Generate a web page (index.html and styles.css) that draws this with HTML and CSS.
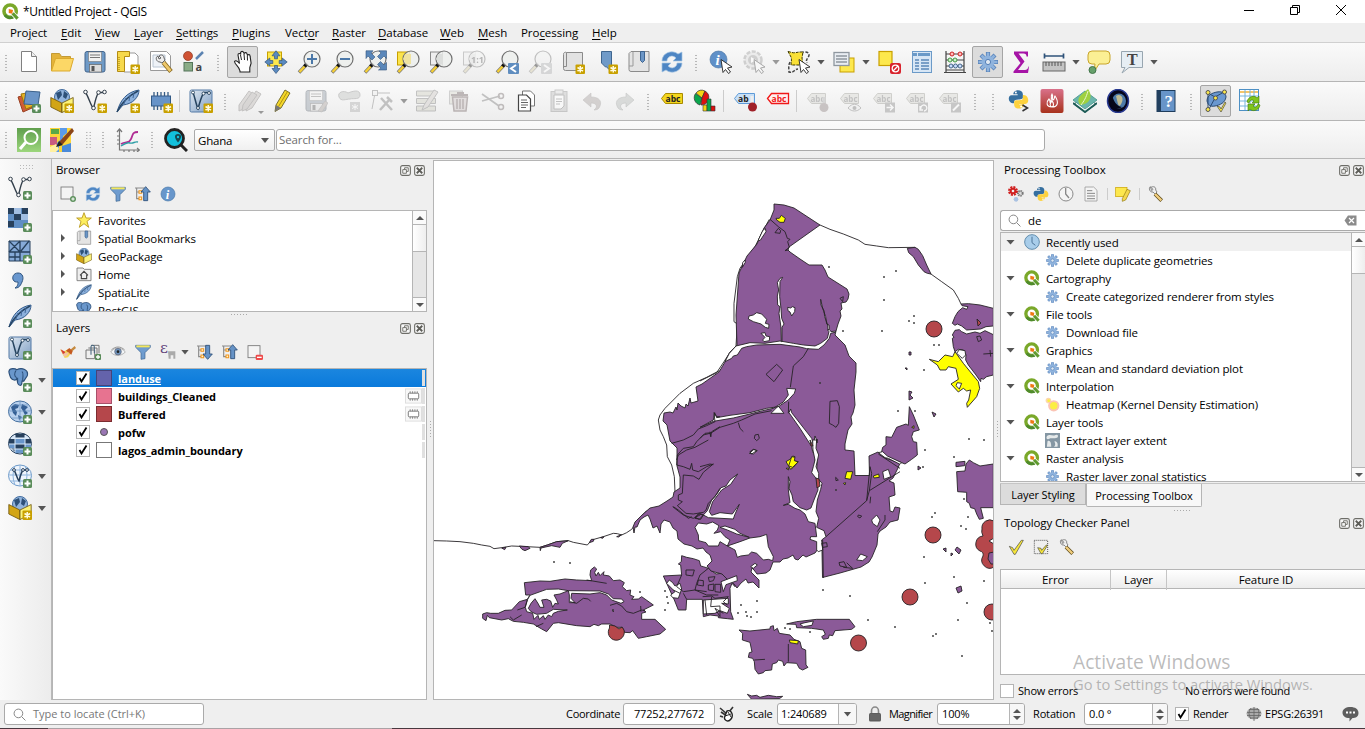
FILE: index.html
```html
<!DOCTYPE html>
<html lang="en">
<head>
<meta charset="utf-8">
<title>*Untitled Project - QGIS</title>
<link rel="stylesheet" href="styles.css">
</head>
<body>
<svg class="defs" width="0" height="0">
<defs>
<linearGradient id="gb" x1="0" y1="0" x2="1" y2="1"><stop offset="0" stop-color="#dfe8f1"/><stop offset="1" stop-color="#7f9fc4"/></linearGradient>
<linearGradient id="gg" x1="0" y1="0" x2="0" y2="1"><stop offset="0" stop-color="#5f9e4d"/><stop offset="1" stop-color="#9cd67c"/></linearGradient>
<linearGradient id="gr" x1="0" y1="0" x2="0" y2="1"><stop offset="0" stop-color="#d9718a"/><stop offset="1" stop-color="#a8321c"/></linearGradient>
<symbol id="add" viewBox="0 0 24 24"><rect x="15" y="15" width="9" height="9" rx="1.500" fill="#5a8c5a"/><path d="M19.500 16.500v6M16.500 19.500h6" stroke="#fff" stroke-width="2"/></symbol>
<symbol id="new" viewBox="0 0 24 24"><rect x="14.500" y="14.500" width="9.500" height="9.500" rx="1" fill="#c8a000"/><path d="M19.250 16v6.500M16.500 17.500l5.500 3.500M16.500 21l5.500-3.500" stroke="#fffbe0" stroke-width="1.500"/></symbol>
<symbol id="q" viewBox="0 0 24 24"><circle cx="11.500" cy="11.500" r="8.700" fill="none" stroke="#7aa82a" stroke-width="5"/><path d="M4 17a9 9 0 0 0 13 2" fill="none" stroke="#4f8b2d" stroke-width="4"/><path d="M13 12.500l9 9.500" stroke="#fff" stroke-width="6.500"/><path d="M15 14.500l7 7.500" stroke="#5f9a2e" stroke-width="4.500"/><path d="M9.500 8.500l6 1.500-1 5-5-1z" fill="#ee7913"/></symbol>
<symbol id="file" viewBox="0 0 24 24"><path d="M4.500 1.500h10l5 5v15h-15z" fill="#fff" stroke="#808080"/><path d="M14.500 1.500v5h5" fill="#eee" stroke="#808080"/></symbol>
<symbol id="folder" viewBox="0 0 24 24"><path d="M1.500 21V3.500h8l2 3h9v4" fill="#e3b33a" stroke="#c39a35"/><path d="M1.500 21l4-12.500h18L20 21z" fill="#fcd766" stroke="#dba92d"/></symbol>
<symbol id="save" viewBox="0 0 24 24"><rect x="2" y="1.500" width="20" height="20.500" rx="2" fill="#6f9ac6" stroke="#42658d"/><rect x="5.500" y="2" width="13" height="9.500" fill="#f1f1f1" stroke="#777" stroke-width=".6"/><path d="M7 5h10M7 7.500h10" stroke="#777"/><rect x="6.500" y="14.500" width="12" height="7.500" fill="#ddd" stroke="#666" stroke-width=".7"/><rect x="8.500" y="16" width="3" height="5" fill="#555"/></symbol>
<symbol id="layout" viewBox="0 0 24 24"><path d="M8 3h11l3 3v16H8z" fill="#fff" stroke="#999"/><path d="M1.500 1.500h12v5h-5v15h-7z" fill="#f7d94c" stroke="#b38b13"/><path d="M3 7v13" stroke="#9a7600" stroke-dasharray="1 1"/><use href="#new"/></symbol>
<symbol id="layman" viewBox="0 0 24 24"><path d="M1.500 1.500h16l4 4v15h-20z" fill="#fff" stroke="#999"/><path d="M4 5h12v12H4z" fill="#eef2f7" stroke="#bac6d3"/><path d="M9 6c-3 1-2 6 2 6l2 1 3-3-1-2c0-3-3-4-5-2l2 2-2 1z" fill="#eee" stroke="#555" stroke-width=".9"/><path d="M14.500 12.500l7.500 9" stroke="#8a6b22" stroke-width="4.500"/><path d="M14.500 12.500l7 8.500" stroke="#eec86b" stroke-width="2.800"/></symbol>
<symbol id="style" viewBox="0 0 24 24"><circle cx="6" cy="6" r="4.500" fill="#cf5233" stroke="#8d3620" stroke-width=".7"/><path d="M14 9l7-7" stroke="#5c84b2" stroke-width="2.500"/><rect x="2" y="12.500" width="8.500" height="8.500" fill="#8aac87" stroke="#55755a"/><text x="13.500" y="21" font-size="11" fill="#444" font-family="Open Sans">a</text></symbol>
<symbol id="hand" viewBox="0 0 24 24"><path d="M9 21c-1-5-5-6-5.500-9.500 1-1.500 3-.5 5 2L7 5c0-2 2-2 2.800-.5L9.600 2.500c.5-1.500 2.500-1.500 3 0l.5 1c1-1.500 2.800-1 3 .7l.4 1c1-1 2.500-.8 2.600 1l1 7-1.300 4.500V22H9z" fill="#fff" stroke="#222" stroke-width="1.100"/><path d="M9.500 5l1 5M13 4l.5 6M16.300 5.500l.2 5" stroke="#222"/></symbol>
<symbol id="pan" viewBox="0 0 24 24"><rect x="3.500" y="2" width="14" height="14" fill="#fde84d" stroke="#c8a000"/><path d="M12 .8l4 5h-2.500v3h-3v-3H8zM12 23.500l4-5h-2.500v-3h-3v3H8zM.8 12l5-4v2.500h3v3h-3V16zM23.200 12l-5-4v2.500h-3v3h3V16z" fill="#5a8ac0" stroke="#35587f" stroke-width=".7"/></symbol>
<symbol id="mag" viewBox="0 0 24 24"><path d="M9.500 14.500l-7.500 8" stroke="#777" stroke-width="3.600"/><path d="M9 15l-6.500 7" stroke="#f5cf35" stroke-width="2.400"/><path d="M10 13.500l-2.500 3" stroke="#111" stroke-width="3.500"/><circle cx="15" cy="9" r="8" fill="#ecefec" fill-opacity=".85" stroke="#707070" stroke-width="1.200"/></symbol>
<symbol id="zin" viewBox="0 0 24 24"><use href="#mag"/><path d="M15 4v10M10 9h10" stroke="#4c78a8" stroke-width="2"/></symbol>
<symbol id="zout" viewBox="0 0 24 24"><use href="#mag"/><path d="M10 9h10" stroke="#4c78a8" stroke-width="2"/></symbol>
<symbol id="zfull" viewBox="0 0 24 24"><use href="#mag"/><path d="M3 .8h7L8 3l4 4-3 3-4-4-2 2.500zM23.500.8v7.700L21 6l-3.500 3.500-3-3L18 3l-2-2.200zM23.500 20h-8l2.500-2-3.500-3.500 3-3L21 15l2.500-2.500z" fill="#5a87ba" stroke="#32557d" stroke-width=".6"/></symbol>
<symbol id="zsel" viewBox="0 0 24 24"><rect x="1.500" y="2" width="12" height="13" fill="#fbe44c" stroke="#c8a000"/><use href="#mag"/><path d="M9 4h6v10h-5l-3-5z" fill="#efe3a0"/></symbol>
<symbol id="zlay" viewBox="0 0 24 24"><rect x="1.500" y="2" width="12" height="13" fill="#eee" stroke="#888"/><use href="#mag"/><path d="M9 4h5v10h-4l-3-5z" fill="#dcdedc"/></symbol>
<symbol id="znat" viewBox="0 0 24 24"><use href="#zlay"/><text x="9" y="13" font-size="9" font-weight="bold" font-family="Open Sans" fill="#555">1:1</text></symbol>
<symbol id="zlast" viewBox="0 0 24 24"><use href="#mag"/><rect x="13" y="13" width="11" height="11" rx="1" fill="#5f8dbf"/><path d="M21 15l-5 3.500 5 3.500" fill="none" stroke="#fff" stroke-width="2"/></symbol>
<symbol id="znext" viewBox="0 0 24 24"><use href="#mag"/><rect x="13" y="13" width="11" height="11" rx="1" fill="#a8b0b8"/><path d="M16 15l5 3.500-5 3.500" fill="none" stroke="#fff" stroke-width="2"/></symbol>
<symbol id="map" viewBox="0 0 24 24"><path d="M5.500 2.500h16v18h-17a2 2 0 0 1-2-2v-14a2 2 0 0 1 3-2v14H3" fill="#e2e2e2" stroke="#8a8a8a"/></symbol>
<symbol id="mapnew" viewBox="0 0 24 24"><use href="#map"/><use href="#new"/></symbol>
<symbol id="bmnew" viewBox="0 0 24 24"><path d="M7.500 1.500h10v20l-5-4.500h-1l-4-4z" fill="#6f9ac8" stroke="#3f668f"/><use href="#new"/></symbol>
<symbol id="bm" viewBox="0 0 24 24"><path d="M4 1.500h18v20H4a2 2 0 0 1-2-2v-16z" fill="#e4e4e4" stroke="#8b8b8b"/><path d="M6 2v14H2" stroke="#999" fill="none"/><path d="M13.500 1.500h4v9l-2 2-2-2z" fill="#6c96c6" stroke="#3d6490"/></symbol>
<symbol id="refresh" viewBox="0 0 24 24"><path d="M2 11C2 3 12-1 18 4l4-2v9h-9l3-3c-4-4-9-1-9 3zM22 13c0 8-10 12-16 7l-4 2v-9h9l-3 3c4 4 9 1 9-3z" fill="#4e86c4" stroke="#a5c4e3" stroke-width=".7"/></symbol>
<symbol id="cur" viewBox="0 0 24 24"><path d="M12 9.500l11 7.500-4.500 1 3 4-2 1.500-3-4-2.500 3z" fill="#fff" stroke="#222" stroke-width=".9"/></symbol>
<symbol id="info" viewBox="0 0 24 24"><circle cx="9.500" cy="9.500" r="8.500" fill="#5f90c8" stroke="#44719f" stroke-width=".6"/><text x="6.500" y="14.500" fill="#fff" font-family="Liberation Serif" font-style="italic" font-weight="bold" font-size="15">i</text></symbol>
<symbol id="identify" viewBox="0 0 24 24"><use href="#info"/><use href="#cur"/></symbol>
<symbol id="gearsym" viewBox="0 0 24 24"><g stroke="#5580b8" stroke-width="4.200"><path d="M12 2v20M2 12h20M5 5l14 14M19 5L5 19"/></g><g stroke="#8fb3dd" stroke-width="2.600"><path d="M12 2.500v19M2.500 12h19M5.500 5.500l13 13M18.500 5.500l-13 13"/></g><circle cx="12" cy="12" r="6.500" fill="#8fb3dd"/><circle cx="12" cy="12" r="2.600" fill="#dfe8f2" stroke="#5580b8"/></symbol>
<symbol id="action" viewBox="0 0 24 24"><circle cx="11" cy="10" r="8.500" fill="#ddd" stroke="#999" stroke-width="2.500" stroke-dasharray="4 1.500"/><circle cx="11" cy="10" r="5" fill="#999"/><path d="M9 7v6l5-3z" fill="#fff"/><use href="#cur"/></symbol>
<symbol id="select" viewBox="0 0 24 24"><path d="M3 12c-2 4-1 7-1 10 6 1 5-3 9-3M14 3c4-2 8-1 8 2s-4 4-2 8" fill="none" stroke="#444" stroke-dasharray="3 1.500" stroke-width="1.500"/><path d="M1 1.500l4 1c3 1 6-1 11-.5L15 8l1 7H4c0-3 1-5 0-8z" fill="#f9e036" stroke="#3c3800" stroke-dasharray="3 1"/><use href="#cur"/></symbol>
<symbol id="form" viewBox="0 0 24 24"><rect x="8" y="8" width="14" height="14" fill="#fde84d" stroke="#c8a000"/><rect x="2" y="2.500" width="15" height="13" fill="#e9edf2" stroke="#8f979f" stroke-width="1.300"/><path d="M4 6h11M4 9h11M4 12h11" stroke="#8f979f" stroke-width="1.400"/></symbol>
<symbol id="desel" viewBox="0 0 24 24"><rect x="2" y="1.500" width="13" height="14" fill="#fde84d" stroke="#c8a000" stroke-width="1.200"/><rect x="13" y="13" width="11" height="11" rx="2" fill="#d8232d"/><circle cx="18.500" cy="18.500" r="3.300" fill="none" stroke="#fff" stroke-width="1.300"/><path d="M16 21l5-5" stroke="#fff" stroke-width="1.300"/></symbol>
<symbol id="table" viewBox="0 0 24 24"><rect x="2.500" y="1.500" width="19" height="21" fill="#d7e6f5" stroke="#6b9ac8"/><path d="M3 4.500h4M8 4.500h12" stroke="#6b9ac8" stroke-width="3"/><path d="M5 10h4M11 10h8M5 13h4M11 13h8M5 16h4M11 16h8M5 19h4M11 19h8" stroke="#5b88b8" stroke-width="1.300"/></symbol>
<symbol id="abacus" viewBox="0 0 24 24"><path d="M3 1v21M21 1v21M1 22.500h22M3 4h18M3 10h18M3 16h18M3 20h18" stroke="#444" stroke-width="1.200"/><g stroke-width="1"><g fill="#fbb" stroke="#c22"><circle cx="9" cy="4" r="2"/><circle cx="17" cy="4" r="2"/></g><g fill="#cec" stroke="#494"><circle cx="7" cy="10" r="2"/><circle cx="12" cy="10" r="2"/></g><g fill="#cdf" stroke="#468"><circle cx="8" cy="16" r="2"/><circle cx="12.500" cy="16" r="2"/><circle cx="17" cy="16" r="2"/></g></g></symbol>
<symbol id="sigma" viewBox="0 0 24 24"><path d="M5 1.500h14v5h-1.500c0-2-1-3-3-3H9.500l6 8-6.500 8.500h7c2 0 3-1.500 3.500-3.500H20l-1 6.500H4.500v-1.500l7-8.500-6.500-9z" fill="#a614a6"/></symbol>
<symbol id="measure" viewBox="0 0 24 24"><path d="M2 6h20M2.500 3.500v5M21.500 3.500v5" stroke="#2f537a" stroke-width="1.700"/><rect x="1" y="12" width="22" height="9" fill="#c4c4c4" stroke="#666"/><path d="M4 12v4M7 12v4M10 12v4M13 12v4M16 12v4M19 12v4" stroke="#555"/></symbol>
<symbol id="tip" viewBox="0 0 24 24"><path d="M5 1h14q4 0 4 4v5q0 4-4 4h-7l-5 8 1-8H5q-4 0-4-4V5q0-4 4-4z" fill="#fbef94" stroke="#c8a52c"/><circle cx="5.500" cy="20" r="3.500" fill="#66a06b" stroke="#42754a"/></symbol>
<symbol id="textann" viewBox="0 0 24 24"><path d="M1.500 1.500h21v16H9l-7 5.500 3-5.500H1.500z" fill="#e6eef4" stroke="#98a6b0"/><text x="7" y="15" font-family="Liberation Serif" font-weight="bold" font-size="16" fill="#444">T</text></symbol>
<symbol id="dsm" viewBox="0 0 24 24"><path d="M1 8l10-3 4 14-9 4z" fill="#cf5c36" stroke="#984022"/><path d="M4 5l11-2 4 13-10 4z" fill="#e6b124" stroke="#9f780b"/><path d="M9 2l14 1-2 13-14-1z" fill="#6b95c7" stroke="#3c628c"/><use href="#add"/></symbol>
<symbol id="gpkg" viewBox="0 0 24 24"><circle cx="12" cy="8" r="7.500" fill="#92b4dd" stroke="#426c9e"/><path d="M6 4l5-2 1 4-4 5zM14 2l4 3-2 5-3-2z" fill="#2d5078"/><path d="M.8 8.500l11 5.500v9.500L.8 18z" fill="#d2a516" stroke="#6b5208" stroke-width=".8"/><path d="M23.200 8.500L12 14v9.500L23.200 18z" fill="#fbf27a" stroke="#6b5208" stroke-width=".8"/></symbol>
<symbol id="gpkgn" viewBox="0 0 24 24"><use href="#gpkg"/><use href="#new"/></symbol>
<symbol id="vec" viewBox="0 0 24 24"><path d="M2.500 3.500c3 4 5 13 8 16 1-4 2-11 5-16h6" fill="none" stroke="#333f4b" stroke-width="1.400"/><g fill="#fff" stroke="#333f4b"><circle cx="2.500" cy="3" r="1.800"/><circle cx="15.500" cy="3.500" r="1.800"/><circle cx="21.500" cy="3" r="1.800"/><circle cx="10.500" cy="19" r="1.800"/></g></symbol>
<symbol id="vecn" viewBox="0 0 24 24"><use href="#vec"/><use href="#new"/></symbol>
<symbol id="veca" viewBox="0 0 24 24"><use href="#vec"/><use href="#add"/></symbol>
<symbol id="feather" viewBox="0 0 24 24"><path d="M1 23C4 12 10 3 23 1c0 7-6 14-16 15z" fill="#8bb0dc" stroke="#325a8a"/><path d="M1 23C6 13 12 7 22 2" fill="none" stroke="#264463" stroke-width="1.400"/><path d="M10 9l-2 6M14 6l-1 6M18 4l-1 5" stroke="#42699a"/></symbol>
<symbol id="feathern" viewBox="0 0 24 24"><use href="#feather"/><use href="#new"/></symbol>
<symbol id="feathera" viewBox="0 0 24 24"><use href="#feather"/><use href="#add"/></symbol>
<symbol id="chip" viewBox="0 0 24 24"><path d="M5 3v18M8.500 3v18M12 3v18M15.500 3v18M19 3v18" stroke="#375c85" stroke-width="1.300"/><rect x="2.500" y="7" width="19" height="10" fill="#6793c8" stroke="#325985"/></symbol>
<symbol id="chipn" viewBox="0 0 24 24"><use href="#chip"/><use href="#new"/></symbol>
<symbol id="vbox" viewBox="0 0 24 24"><rect x="1" y="1" width="22" height="22" rx="1.500" fill="url(#gb)" stroke="#5279a5"/><path d="M4 3.500c2 5 3 12 5 16 2-6 3-12 6-16h4" fill="none" stroke="#27445f" stroke-width="1.500"/><g fill="#fff" stroke="#27445f" stroke-width=".9"><circle cx="4" cy="3.500" r="1.500"/><circle cx="14.500" cy="4.500" r="1.500"/><circle cx="20" cy="4" r="1.500"/><circle cx="9" cy="19" r="1.500"/></g></symbol>
<symbol id="vboxn" viewBox="0 0 24 24"><use href="#vbox"/><use href="#new"/></symbol>
<symbol id="vboxa" viewBox="0 0 24 24"><use href="#vbox"/><use href="#add"/></symbol>
<symbol id="pencil" viewBox="0 0 24 24"><path d="M5 16L14 1l5 3-9 15-6 3.500z" fill="#f5d72a" stroke="#6c6325" stroke-width=".9"/><path d="M7.500 17.500L16.500 2.500" stroke="#b09212"/><path d="M5 16l5 3-6 3.500z" fill="#777"/></symbol>
<symbol id="pencils" viewBox="0 0 24 24"><path d="M1 16L11 2l4 3-10 15-4 2zM9 16L18 2l5 3-9 14-6 3z" fill="#c9b3a5" stroke="#83756e"/><path d="M5 16l9-13 5 3-10 14-5 2z" fill="#bca99d" stroke="#83756e"/></symbol>
<symbol id="saveed" viewBox="0 0 24 24"><use href="#save"/><path d="M14 22l7-10 3 2-6 9z" fill="#bb998b" stroke="#777" stroke-width=".7"/></symbol>
<symbol id="poly" viewBox="0 0 24 24"><path d="M2 8c-2-5 5-7 9-4 5-2 12-4 12 2 0 5-6 3-10 4C9 10 4 13 2 8z" fill="#b5c2b5" stroke="#888"/><rect x="13" y="13" width="10" height="10" fill="#aaa"/><path d="M18 15v6M15 16.500l6 3M15 19.500l6-3" stroke="#fff"/></symbol>
<symbol id="vertex" viewBox="0 0 24 24"><path d="M5 4L2 20M5 4h15" stroke="#777"/><rect x="2.500" y="1.500" width="5" height="5" fill="#eee" stroke="#777"/><path d="M11 9l11 12M20 10L10 21M17 8l5 5" stroke="#777" stroke-width="2.500"/></symbol>
<symbol id="attr" viewBox="0 0 24 24"><path d="M1.500 2h19v5h-19zM1.500 9.500h19v5h-19zM1.500 17h19v5h-19z" fill="#cfcf98" stroke="#777"/><path d="M7 21l2-5L19 1l4 2-10 15z" fill="#d9c3b4" stroke="#777"/></symbol>
<symbol id="trash" viewBox="0 0 24 24"><rect x="1.500" y="2" width="13" height="13" fill="#d9d9a8" stroke="#999"/><path d="M3 6h17M9 4h7" stroke="#8d5050" stroke-width="2"/><path d="M4.500 8h15l-1.500 14H6z" fill="#e0b8b8" stroke="#8d5050" stroke-width="1.500"/><path d="M9 10v10M12 10v10M15 10v10" stroke="#8d5050" stroke-width="1.500"/></symbol>
<symbol id="cut" viewBox="0 0 24 24"><path d="M1 5l17 12M1 12l18-5" stroke="#777" stroke-width="1.800"/><circle cx="20" cy="18" r="2.500" fill="none" stroke="#866" stroke-width="1.500"/><circle cx="20" cy="7" r="2.500" fill="none" stroke="#866" stroke-width="1.500"/></symbol>
<symbol id="copy" viewBox="0 0 24 24"><path d="M8.500 2h8l4 4v11h-12z" fill="#fff" stroke="#777"/><path d="M4.500 6h8l4 4v12h-12z" fill="#fff" stroke="#444" stroke-width="1.200"/><path d="M7 11h6M7 13.500h7M7 16h7M7 18.500h5" stroke="#666"/></symbol>
<symbol id="paste" viewBox="0 0 24 24"><rect x="4" y="2.500" width="16" height="20" fill="#bbb" stroke="#888"/><path d="M7 6h10v11l-3 3H7z" fill="#fff" stroke="#777"/><rect x="8" y="1" width="8" height="4" fill="#ddd" stroke="#888"/><path d="M9 10h6M9 12.500h6M9 15h4" stroke="#777"/></symbol>
<symbol id="undo" viewBox="0 0 24 24"><path d="M3 11l8-7v4c8 0 11 4 9 9-1 3-3 4-6 4 4-3 3-7-3-7v4z" fill="#b79a90" stroke="#8a7a75" stroke-width=".6"/></symbol>
<symbol id="redo" viewBox="0 0 24 24"><path d="M21 11l-8-7v4c-8 0-11 4-9 9 1 3 3 4 6 4-4-3-3-7 3-7v4z" fill="#a9b8ae" stroke="#78857c" stroke-width=".6"/></symbol>
<symbol id="lab" viewBox="0 0 24 24"><path d="M1.500 9.500l4-5h17v10h-17z" fill="#f3d51d" stroke="#a88a00"/><text x="5.500" y="12.500" font-size="8.500" font-weight="bold" font-family="Open Sans" fill="#222">abc</text></symbol>
<symbol id="labr" viewBox="0 0 24 24"><path d="M1.500 9.500l4-5h17v10h-17z" fill="#fff0f0" stroke="#f01818" stroke-width="1.300"/><text x="5.500" y="12.500" font-size="8.500" font-weight="bold" font-family="Open Sans" fill="#f01818">abc</text></symbol>
<symbol id="labb" viewBox="0 0 24 24"><path d="M1.500 9.500l4-5h16v10h-16z" fill="#c9e0f6" stroke="#5e9bd8"/><text x="5" y="12.500" font-size="8.500" font-weight="bold" font-family="Open Sans" fill="#222">ab</text><path d="M19 7v9" stroke="#eee" stroke-width="3"/><circle cx="19.500" cy="18" r="4.500" fill="#a02028"/></symbol>
<symbol id="labg" viewBox="0 0 24 24"><path d="M1.500 9.500l4-5h14v10h-14z" fill="#d8d6bd" stroke="#9a9878"/><text x="4.500" y="12.500" font-size="8" font-weight="bold" font-family="Open Sans" fill="#777">abc</text></symbol>
<symbol id="lg1" viewBox="0 0 24 24"><use href="#labg"/><path d="M18 8v9" stroke="#aaa" stroke-width="3"/><circle cx="18" cy="18.500" r="4.500" fill="#a77"/></symbol>
<symbol id="lg2" viewBox="0 0 24 24"><use href="#labg"/><path d="M9 19c4-5 9-5 13 0-4 4-9 4-13 0z" fill="#eee" stroke="#777"/><circle cx="15.500" cy="19" r="2" fill="#777"/></symbol>
<symbol id="lg3" viewBox="0 0 24 24"><use href="#labg"/><rect x="13" y="13.500" width="10" height="10" fill="#888"/><path d="M14.500 18.500h6M18 15.500l3 3-3 3" stroke="#fff" fill="none" stroke-width="1.500"/></symbol>
<symbol id="lg4" viewBox="0 0 24 24"><use href="#labg"/><rect x="13" y="13.500" width="10" height="10" fill="#888"/><path d="M16 20a3 3 0 1 1 3 2M15 17v4h3" stroke="#fff" fill="none" stroke-width="1.300"/></symbol>
<symbol id="lg5" viewBox="0 0 24 24"><use href="#labg"/><rect x="13" y="13.500" width="10" height="10" fill="#888"/><path d="M15 21.500l6-6" stroke="#fff" stroke-width="2"/></symbol>
<symbol id="diag" viewBox="0 0 24 24"><path d="M9 9L2.500 4.500A7.500 7.500 0 0 0 7 16z" fill="#0aa54d" stroke="#333" stroke-width=".7"/><path d="M9 9L3 4a7.500 7.500 0 0 1 9-2z" fill="#f5d613" stroke="#333" stroke-width=".7"/><path d="M9 9l3-7a7.500 7.500 0 0 1-4 14z" fill="#d11" stroke="#333" stroke-width=".7"/><path d="M10 16h4v6h-4z" fill="#f5d613" stroke="#333" stroke-width=".6"/><path d="M14 10h4v12h-4z" fill="#0aa54d" stroke="#333" stroke-width=".6"/><path d="M18 17h4v5h-4z" fill="#d11" stroke="#333" stroke-width=".6"/></symbol>
<symbol id="py" viewBox="0 0 24 24"><path d="M6 6c0-6 11-6 11 0v4c0 3-9 1-10 4v2C0 18-1 7 4 7h7V6z" fill="#366f9f"/><path d="M18 17c0 7-11 7-11 1v-3c0-4 9-1 10-4V7c7-1 8 10 3 10h-7v1z" fill="#fdd23f"/><circle cx="9" cy="4" r="1.100" fill="#fff"/><circle cx="15" cy="20" r="1.100" fill="#fff"/></symbol>
<symbol id="pyc" viewBox="0 0 24 24"><use href="#py" x="1" width="21" height="21"/><path d="M15.500 16l5 3-5 3" fill="none" stroke="#333" stroke-width="1.500"/></symbol>
<symbol id="fire" viewBox="0 0 24 24"><rect x=".5" width="23" height="24" rx="2" fill="url(#gr)"/><path d="M12 5c2 3-1 4 1 6 2-1 1-3 2-4 4 6 3 11-3 11-6 0-6-5-3-8 1 1 1 2 1 3 3-2 0-5 2-8zM12 12c2 2 2 5 0 6-3-1-2-4 0-6z" fill="none" stroke="#fff" stroke-width="1.100"/></symbol>
<symbol id="leaf" viewBox="0 0 24 24"><path d="M1 15l11-7 11 7-11 8z" fill="#fff" stroke="#16534d"/><path d="M0 11l12-9 12 9-12 9z" fill="#6bb5ac" stroke="#55a096"/><path d="M0 14l12 9 12-9" fill="none" stroke="#1d5c57" stroke-width="2"/><path d="M7 16C2 8 10 5 15 0c5 7 3 15-8 16z" fill="#9fd140"/><path d="M8 16c3-4 5-7 7-14" stroke="#eaf5cd" fill="none"/></symbol>
<symbol id="earth" viewBox="0 0 24 24"><ellipse cx="12" cy="12" rx="10.500" ry="11.500" fill="#05051c" stroke="#27388f" stroke-width="1.500"/><ellipse cx="13" cy="12" rx="7" ry="7.500" fill="#4c79a8"/><path d="M10 7c4-3 8 1 6 6-2 5-3 4-4 2z" fill="#c1bb93"/><path d="M6 5c1 6 4 12 10 13-6 4-13 0-12-7z" fill="#070719"/></symbol>
<symbol id="help" viewBox="0 0 24 24"><rect x="2" y="1.500" width="18" height="21" fill="#6794c8" stroke="#1e3c5c"/><path d="M2 1.500h4v21H2z" fill="#22405f"/><text x="9.500" y="17.500" font-family="Liberation Serif" font-size="17" fill="#fff">?</text></symbol>
<symbol id="topo" viewBox="0 0 24 24"><path d="M3 12C3 6 8 4 13 3c6-1 9 2 9 5-1 6-6 8-11 9-5 1-7-1-8-5z" fill="#6a98d0" stroke="#2a4b72"/><path d="M4 4l7 4 9-5M11 9L5 20M4 4v16" stroke="#2a4b72" fill="none"/><g fill="#fbe94a" stroke="#555"><circle cx="4" cy="3.500" r="2"/><circle cx="20.500" cy="3" r="2"/><circle cx="11.500" cy="9" r="2"/><circle cx="4" cy="20.500" r="2"/></g><path d="M13 17l3 1 1 2 4-7 1 1-5 9z" fill="#fbe94a" stroke="#333" stroke-width=".6"/></symbol>
<symbol id="tabref" viewBox="0 0 24 24"><rect x="2.500" y=".5" width="19" height="21" fill="#fff" stroke="#4d90c5"/><path d="M3 3h18" stroke="#f6c66a" stroke-width="2"/><path d="M3 7h18M3 12h18M3 17h18M8 1v20M13 1v20M17 1v20" stroke="#79b5dc"/><path d="M10 13c1-6 8-7 10-4l2-2v7h-7l2-2c-2-2-4-1-5 2zM23 16c-1 6-8 7-10 4l-2 2v-7h7l-2 2c2 2 4 1 5-2z" fill="#7fc41c" stroke="#3f7a06" stroke-width=".6"/></symbol>
<symbol id="greenmag" viewBox="0 0 24 24"><rect width="24" height="24" fill="url(#gg)"/><circle cx="14" cy="9.500" r="6.500" fill="none" stroke="#fff" stroke-width="2"/><path d="M9 14l-6 7" stroke="#fff" stroke-width="3"/></symbol>
<symbol id="osm" viewBox="0 0 24 24"><rect width="21" height="24" fill="#fbd43a"/><path d="M10 0h7v5l-4 3v5l-4 5v6H6v-8l4-4z" fill="#5b9bea"/><path d="M12 18l9-3v9h-9z" fill="#4a8ad8"/><path d="M0 9h7v8H0z" fill="#c85c80"/><path d="M1 1h8v5H1z" fill="#58a848"/><path d="M0 19l6-3 3 5-3 3H0z" fill="#fff0a0"/><path d="M9 14L22 0l2 3-11 13-5 1z" fill="#8b4518"/><path d="M9 13l4 4-7 2z" fill="#222"/></symbol>
<symbol id="plot" viewBox="0 0 24 24"><path d="M3.500 2v20H23M1 4l2.500-3L6 4M1 8h2M1 12h2M1 16h2M8 22v2M13 22v2M18 22v2M21 20l2.500 2-2.500 2" stroke="#777" stroke-width="1.200" fill="none"/><path d="M5 16c5-3 8 0 10-5 2-4 1-7 7-7" fill="none" stroke="#b02c93" stroke-width="1.800"/><path d="M5 18c5-3 7-4 9-3 4 1 4-2 8-1" fill="none" stroke="#2f9ea7" stroke-width="1.400"/></symbol>
<symbol id="geo" viewBox="0 0 24 24"><circle cx="10.500" cy="10.500" r="9" fill="#12c0dc" stroke="#222" stroke-width="2.800"/><path d="M17 17l6 6" stroke="#222" stroke-width="3"/><path d="M14 6c4 0 4 4 0 8.500-4-4.500-4-8.500 0-8.500z" fill="#16454f"/><circle cx="14" cy="9" r="1.200" fill="#12c0dc"/></symbol>
<symbol id="raster" viewBox="0 0 24 24"><path d="M0 0h20v20H0z" fill="#5f8ec4"/><path d="M0 0h6v6H0zM14 0h6v6h-6zM6 6h7v6H6zM0 13h6v6H0z" fill="#27405c"/><path d="M6 0h7v6H6zM13 6h7v6h-7z" fill="#a1bee2"/><use href="#add"/></symbol>
<symbol id="mesh" viewBox="0 0 24 24"><path d="M1 1h21v20H1z" fill="#86aad8" stroke="#27405c"/><path d="M1 12h21M12 1v20M1 1l11 11M1 12L12 1M13 11l8-10M7 12v9M1 17h11" stroke="#27405c" stroke-width="1.300" fill="none"/><use href="#add"/></symbol>
<symbol id="comma" viewBox="0 0 24 24"><path d="M10 1c5 0 6 5 4 9-2 5-4 6-7 6 3-2 3-4 3-6-7 1-7-9 0-9z" fill="#6a98cf" stroke="#2f547f"/><use href="#add"/></symbol>
<symbol id="pg" viewBox="0 0 24 24"><path d="M1 4c1-5 8-3 9-2 6-3 14 0 12 7l-4 6h-2c0 4-1 6-4 4-2-2-1-6-2-7-1 3-5 2-7-1-1-3-2-5-2-7z" fill="#6a97cc" stroke="#2c4f79" stroke-width="1.300"/><path d="M9 3c-2 3-2 7 1 8M16 4c3 3 0 6 1 11M11 11v5" fill="none" stroke="#2c4f79" stroke-width="1.200"/></symbol>
<symbol id="pga" viewBox="0 0 24 24"><use href="#pg" width="21" height="21"/><use href="#add"/></symbol>
<symbol id="wms" viewBox="0 0 24 24"><ellipse cx="12" cy="11.500" rx="11.500" ry="10.500" fill="#b9d1ee" stroke="#47719f"/><path d="M3 7l4-3 4 1-1 3-3 1 2 3-1 4-3-3zM14 4l6 3-3 3 3 3-3 2-2-4-2-3zM10 15l4 2-3 3z" fill="#345f94"/><path d="M12 1v21M1 11h22M4 5h16M4 18h16" stroke="#698fbd" fill="none" stroke-width=".7"/><use href="#add"/></symbol>
<symbol id="xyz" viewBox="0 0 24 24"><ellipse cx="12" cy="11.500" rx="11.500" ry="10.500" fill="#d9e8f8" stroke="#27405c"/><path d="M7 2h10v4H7zM1 7h6v5H1zM17 7h6v5h-6zM7 12h10v5H7zM3 16h4v4zM17 17h4l-3 3z" fill="#27405c"/><path d="M7 7h10v5H7zM1 12h6v4H2zM17 12h6v4h-6zM7 17h10v4H7z" fill="#6996ca"/><path d="M3 6h18M1 12h22M2 17h20M7 3v17M17 3v17" stroke="#d9e8f8"/><use href="#add"/></symbol>
<symbol id="wfs" viewBox="0 0 24 24"><ellipse cx="12" cy="11.500" rx="11.500" ry="10.500" fill="#eff5fc" stroke="#6d9ac9"/><path d="M1 11h22M3 6h18M3 17h18M12 1v21M7 2q-4 9 0 19M17 2q4 9 0 19" stroke="#8eb4dd" fill="none"/><path d="M6 6c2 3 3 9 5 11 1-4 2-8 4-11h4" fill="none" stroke="#27405c" stroke-width="1.500"/><g fill="#fff" stroke="#27405c"><circle cx="6" cy="6" r="1.400"/><circle cx="15" cy="6" r="1.400"/><circle cx="19" cy="6" r="1.400"/></g><use href="#add"/></symbol>
<symbol id="funnel" viewBox="0 0 24 24"><path d="M1 2h22v3l-8 8v9l-6 1V13L1 5z" fill="#6f9ccf" stroke="#3c6590"/><path d="M2 3.500h20" stroke="#f4e75e" stroke-width="3"/></symbol>
<symbol id="rectadd" viewBox="0 0 24 24"><rect x="1.500" y="1.500" width="18" height="18" fill="#f4f4f4" stroke="#777" stroke-width="1.300"/><circle cx="19.500" cy="19.500" r="4.500" fill="#5d915d"/><path d="M19.500 17v5M17 19.500h5" stroke="#fff" stroke-width="1.500"/></symbol>
<symbol id="tree" viewBox="0 0 24 24"><path d="M0 3h14M2.500 3v17M3 9h4M3 19h4" stroke="#8a8a8a" stroke-width="1.700" fill="none"/><path d="M6 7h4v4H6zM6 16.500h4v4H6z" fill="#fff3d0" stroke="#f0951c" stroke-width="1.600"/></symbol>
<symbol id="up" viewBox="0 0 24 24"><use href="#tree"/><path d="M16 1l7 8h-4v13h-6V9H9z" fill="#6693c6" stroke="#2d4f78" stroke-width="1.300"/></symbol>
<symbol id="down" viewBox="0 0 24 24"><use href="#tree"/><path d="M16 23l7-8h-4V2h-6v13H9z" fill="#6693c6" stroke="#2d4f78" stroke-width="1.300"/></symbol>
<symbol id="infos" viewBox="0 0 24 24"><circle cx="12" cy="12" r="10.500" fill="#6796cb" stroke="#4576a8"/><text x="8.500" y="19" fill="#fff" font-family="Liberation Serif" font-style="italic" font-weight="bold" font-size="19">i</text></symbol>
<symbol id="star" viewBox="0 0 24 24"><path d="M12 1l3 8h8l-6.500 5 2.500 9-7-5.500L5 23l2.500-9L1 9h8z" fill="#fdee5f" stroke="#b79619" stroke-width="1.300"/></symbol>
<symbol id="home" viewBox="0 0 24 24"><path d="M1.500 3h9l2 2h10v17h-21z" fill="#eee" stroke="#777" stroke-width="1.300"/><path d="M6 14l6-6 6 6M8 13v6h8v-6" fill="none" stroke="#444" stroke-width="1.700"/></symbol>
<symbol id="brush" viewBox="0 0 24 24"><path d="M15 9l7-6 2 3-7 6z" fill="#c58a40"/><path d="M0 8l6 3 6-3 6 4-6 8-5 1z" fill="#f4d557"/><path d="M1 8l7 4-3 4z" fill="#d33a3a"/><path d="M9 10l5-4 5 5-2 5z" fill="#c55a20"/><path d="M4 15l9-3-2 5-4 2z" fill="#f1c0a8"/></symbol>
<symbol id="addgrp" viewBox="0 0 24 24"><path d="M1.500 9h13v13h-13z" fill="none" stroke="#777" stroke-width="1.500"/><path d="M5 6h13v13M9 2h12v12" fill="none" stroke="#777" stroke-width="1.500"/><path d="M9 16V4c0-3 5-3 5 0v10" fill="none" stroke="#48667f" stroke-width="1.600"/><use href="#add"/></symbol>
<symbol id="eye" viewBox="0 0 24 24"><path d="M1 12c6-8 15-8 22 0-7 7-16 7-22 0z" fill="#f3f6f8" stroke="#999"/><circle cx="12" cy="11.500" r="5" fill="#6c91ba" stroke="#667"/><circle cx="12" cy="11.500" r="2" fill="#222"/><path d="M2 9c6-6 14-6 20 0" fill="none" stroke="#999" stroke-width="1.500"/></symbol>
<symbol id="eps" viewBox="0 0 24 24"><text x="0" y="14" font-family="DejaVu Serif" font-size="23" fill="#5d3d78">ε</text><path d="M12 11h11v11h-3v-5h-4v5h-3z" fill="#aaa"/></symbol>
<symbol id="rectrem" viewBox="0 0 24 24"><rect x="1.500" y="2.500" width="18" height="18" fill="#f4f4f4" stroke="#777" stroke-width="1.300"/><rect x="13" y="16" width="11" height="8" rx="2" fill="#ee4a4a"/><path d="M15 20h7" stroke="#fff" stroke-width="2"/></symbol>
<symbol id="gears" viewBox="0 0 24 24"><circle cx="7.500" cy="7.500" r="5.500" fill="none" stroke="#d02020" stroke-width="4" stroke-dasharray="2.800 1.500"/><circle cx="7.500" cy="7.500" r="3.500" fill="none" stroke="#d02020" stroke-width="3"/><circle cx="18.500" cy="11" r="3.500" fill="#ddd" stroke="#777" stroke-width="3" stroke-dasharray="2 1"/><circle cx="12" cy="20" r="3.500" fill="#aac2e2"/></symbol>
<symbol id="clock" viewBox="0 0 24 24"><circle cx="12" cy="12" r="10.500" fill="#f4f4f4" stroke="#8a8a8a" stroke-width="1.500"/><path d="M11.500 3v9l5 6" fill="none" stroke="#888" stroke-width="2"/></symbol>
<symbol id="clockb" viewBox="0 0 24 24"><circle cx="12" cy="12" r="11" fill="#a8cdea" stroke="#628dad" stroke-width="1.500"/><path d="M12 4v9l5 4" fill="none" stroke="#4d7498" stroke-width="1.500"/></symbol>
<symbol id="doc" viewBox="0 0 24 24"><path d="M3 1.500h13l5 5v16H3z" fill="#f4f4f4" stroke="#999" stroke-width="1.200"/><path d="M6 7h8M6 11h12M6 15h12M6 19h12" stroke="#888" stroke-width="1.500"/></symbol>
<symbol id="editp" viewBox="0 0 24 24"><rect x="1" y="2" width="17" height="14" fill="#fde84d" stroke="#c8a000"/><path d="M11 19L18 5l5 2-7 14-5 2z" fill="#f3d84b" stroke="#957c13"/></symbol>
<symbol id="wrench" viewBox="0 0 24 24"><path d="M5 1C2 3 4 10 9 9l3 3 3-3-2-3c1-5-4-6-7-4l3 3-2 2z" fill="#eee" stroke="#777" stroke-width="1.300"/><path d="M12 12l10 10" stroke="#594817" stroke-width="5.500"/><path d="M12 12l9.500 9.500" stroke="#f1cd7d" stroke-width="3.500"/></symbol>
<symbol id="chk" viewBox="0 0 24 24"><path d="M2 11l5 2 2 4L20 2h3L11 23H9z" fill="#f7e63b" stroke="#444" stroke-width="1"/></symbol>
<symbol id="chks" viewBox="0 0 24 24"><path d="M2 2h20v20H2z" fill="none" stroke="#555" stroke-width="1.500" stroke-dasharray="1.500 1.500"/><path d="M7 13l5 1 1 3 7-8h2l-8 13h-2z" fill="#f7e63b" stroke="#444"/></symbol>
<symbol id="heat" viewBox="0 0 24 24"><circle cx="5.500" cy="5.500" r="4.500" fill="#fcd7ae"/><circle cx="14" cy="14" r="9" fill="#fbc4b5"/><circle cx="14" cy="14" r="6" fill="#fbee44"/><circle cx="6" cy="6" r="2.300" fill="#fbee44"/></symbol>
<symbol id="extent" viewBox="0 0 24 24"><rect width="24" height="24" fill="#8496a3"/><path d="M3 5c5-4 8 0 12-1 5-3 7 0 5 3-6 3-10 0-15 3-3 0-3-3-2-5zM4 13c4-2 6 2 6 9H3zM15 13c5 0 6 4 5 9h-6c4-3 2-6 1-9z" fill="#e5e9ea"/></symbol>
<symbol id="search" viewBox="0 0 24 24"><circle cx="10" cy="10" r="8" fill="none" stroke="#858585" stroke-width="1.800"/><path d="M16 16l7 7" stroke="#858585" stroke-width="1.800"/></symbol>
<symbol id="float" viewBox="0 0 12 12"><rect x=".7" y=".7" width="10.600" height="10.600" rx="2" fill="#f7f7f7" stroke="#6d6d68" stroke-width="1.200"/><path d="M5 3h4v4M5 3v2M9 7H7M3 5h4v4H3z" fill="none" stroke="#6d6d68"/></symbol>
<symbol id="close" viewBox="0 0 12 12"><rect x=".7" y=".7" width="10.600" height="10.600" rx="2" fill="#f7f7f7" stroke="#6d6d68" stroke-width="1.200"/><path d="M3 3l6 6M9 3L3 9" stroke="#5d5d58" stroke-width="2"/></symbol>
<symbol id="tick" viewBox="0 0 14 14"><rect x=".5" y=".5" width="13" height="13" fill="#fff" stroke="#b4b4b4"/><path d="M3.500 7L5.500 10.500 10.500 2.500" fill="none" stroke="#000" stroke-width="1.800"/></symbol>
</defs></svg>

<div class="app">
<header class="titlebar"><svg class="i16"><use href="#q"/></svg><span class="wtitle">*Untitled Project - QGIS</span>
<div class="winbtns"><svg viewBox="0 0 12 12"><path d="M1 6.500h10" stroke="#000"/></svg><svg viewBox="0 0 12 12"><path d="M1.500 3.500h7v7h-7zM3.500 3v-1.500h7v7H9" fill="none" stroke="#000"/></svg><svg viewBox="0 0 12 12"><path d="M1 1l10 10M11 1L1 11" stroke="#000"/></svg></div></header>
<nav class="menu"><span>Pro<u>j</u>ect</span><span><u>E</u>dit</span><span><u>V</u>iew</span><span><u>L</u>ayer</span><span><u>S</u>ettings</span><span><u>P</u>lugins</span><span>Vect<u>o</u>r</span><span><u>R</u>aster</span><span><u>D</u>atabase</span><span><u>W</u>eb</span><span><u>M</u>esh</span><span>Pro<u>c</u>essing</span><span><u>H</u>elp</span></nav>

<div class="tb"><i class="grip first"></i>
<b><svg><use href="#file"/></svg></b><b><svg><use href="#folder"/></svg></b><b><svg><use href="#save"/></svg></b><b><svg><use href="#layout"/></svg></b><b><svg><use href="#layman"/></svg></b><b><svg><use href="#style"/></svg></b><i class="grip"></i>
<b class="on"><svg><use href="#hand"/></svg></b><b><svg><use href="#pan"/></svg></b><b><svg><use href="#zin"/></svg></b><b><svg><use href="#zout"/></svg></b><b><svg><use href="#zfull"/></svg></b><b><svg><use href="#zsel"/></svg></b><b><svg><use href="#zlay"/></svg></b><b class="off"><svg><use href="#znat"/></svg></b><b><svg><use href="#zlast"/></svg></b><b class="off"><svg><use href="#znext"/></svg></b><b><svg><use href="#mapnew"/></svg></b><b><svg><use href="#bmnew"/></svg></b><b><svg><use href="#bm"/></svg></b><b><svg><use href="#refresh"/></svg></b><i class="grip"></i>
<b><svg><use href="#identify"/></svg></b><b class="off"><svg><use href="#action"/></svg></b><i class="dd soft"></i><b><svg><use href="#select"/></svg></b><i class="dd"></i><b><svg><use href="#form"/></svg></b><i class="dd"></i><b><svg><use href="#desel"/></svg></b><b><svg><use href="#table"/></svg></b><b><svg><use href="#abacus"/></svg></b><b class="on"><svg><use href="#gearsym"/></svg></b><b><svg><use href="#sigma"/></svg></b><b><svg><use href="#measure"/></svg></b><i class="dd"></i><b><svg><use href="#tip"/></svg></b><b><svg><use href="#textann"/></svg></b><i class="dd"></i></div>

<div class="tb"><i class="grip first"></i>
<b><svg><use href="#dsm"/></svg></b><b><svg><use href="#gpkgn"/></svg></b><b><svg><use href="#vecn"/></svg></b><b><svg><use href="#feathern"/></svg></b><b><svg><use href="#chipn"/></svg></b><i class="sep"></i><b><svg><use href="#vboxn"/></svg></b><i class="grip"></i>
<b class="off tiny"><svg><use href="#pencils"/></svg></b><b><svg><use href="#pencil"/></svg></b><b class="off"><svg><use href="#saveed"/></svg></b><b class="off"><svg><use href="#poly"/></svg></b><b class="off"><svg><use href="#vertex"/></svg></b><i class="dd soft"></i><b class="off"><svg><use href="#attr"/></svg></b><b class="off"><svg><use href="#trash"/></svg></b><b class="off"><svg><use href="#cut"/></svg></b><b><svg><use href="#copy"/></svg></b><b class="off"><svg><use href="#paste"/></svg></b><b class="off"><svg><use href="#undo"/></svg></b><b class="off"><svg><use href="#redo"/></svg></b><i class="grip narrow"></i>
<b><svg><use href="#lab"/></svg></b><b><svg><use href="#diag"/></svg></b><i class="sep"></i><b><svg><use href="#labb"/></svg></b><b><svg><use href="#labr"/></svg></b><i class="sep"></i><b class="off"><svg><use href="#lg1"/></svg></b><b class="off"><svg><use href="#lg2"/></svg></b><b class="off"><svg><use href="#lg3"/></svg></b><b class="off"><svg><use href="#lg4"/></svg></b><b class="off"><svg><use href="#lg5"/></svg></b><i class="grip roomy"></i><i class="grip roomy"></i>
<b><svg><use href="#pyc"/></svg></b><b><svg><use href="#fire"/></svg></b><b><svg><use href="#leaf"/></svg></b><b><svg><use href="#earth"/></svg></b><i class="grip"></i><b><svg><use href="#help"/></svg></b><i class="grip"></i><b class="on"><svg><use href="#topo"/></svg></b><b><svg><use href="#tabref"/></svg></b></div>

<div class="tb third"><i class="grip first"></i><b><svg><use href="#greenmag"/></svg></b><b><svg><use href="#osm"/></svg></b><i class="grip wide"></i><i class="grip"></i><b><svg><use href="#plot"/></svg></b><i class="grip"></i><b class="geo"><svg><use href="#geo"/></svg></b>
<div class="combo">Ghana<i class="dd"></i></div><div class="field geofield">Search for...</div></div>

<main class="work">
<aside class="dock"><i class="hgrip"></i>
<div><svg><use href="#veca"/></svg></div><div><svg><use href="#raster"/></svg></div><div><svg><use href="#mesh"/></svg></div><div><svg><use href="#comma"/></svg></div><div><svg><use href="#feathera"/></svg></div><div><svg><use href="#vboxa"/></svg></div><div><svg><use href="#pga"/></svg><i class="dd"></i></div><div><svg><use href="#wms"/></svg><i class="dd"></i></div><div><svg><use href="#xyz"/></svg></div><div><svg><use href="#wfs"/></svg><i class="dd"></i></div><div><svg><use href="#gpkgn"/></svg><i class="dd"></i></div></aside>

<section class="left">
<div class="ptitle"><span>Browser</span><svg><use href="#float"/></svg><svg><use href="#close"/></svg></div>
<div class="ptools"><svg><use href="#rectadd"/></svg><svg><use href="#refresh"/></svg><svg><use href="#funnel"/></svg><svg><use href="#up"/></svg><svg><use href="#infos"/></svg></div>
<div class="box browser"><div class="rows">
<div class="br"><i></i><svg><use href="#star"/></svg><span>Favorites</span></div>
<div class="br"><i class="tri"></i><svg><use href="#bm"/></svg><span>Spatial Bookmarks</span></div>
<div class="br"><i class="tri"></i><svg><use href="#gpkg"/></svg><span>GeoPackage</span></div>
<div class="br"><i class="tri"></i><svg><use href="#home"/></svg><span>Home</span></div>
<div class="br"><i class="tri"></i><svg><use href="#feather"/></svg><span>SpatiaLite</span></div>
<div class="br"><i></i><svg><use href="#pg"/></svg><span>PostGIS</span></div></div>
<div class="sb"><i class="ua"></i><i class="thumb"></i><i class="trk"></i><i class="da"></i></div></div>
<div class="split"><i></i></div>
<div class="ptitle lay"><span>Layers</span><svg><use href="#float"/></svg><svg><use href="#close"/></svg></div>
<div class="ptools lay"><svg><use href="#brush"/></svg><svg><use href="#addgrp"/></svg><svg><use href="#eye"/></svg><svg><use href="#funnel"/></svg><svg><use href="#eps"/></svg><i class="dd"></i><svg><use href="#down"/></svg><svg><use href="#up"/></svg><svg><use href="#rectrem"/></svg></div>
<div class="box layers">
<div class="lr sel"><svg class="ck"><use href="#tick"/></svg><i class="sw landuse"></i><span>landuse</span><em></em></div>
<div class="lr"><svg class="ck"><use href="#tick"/></svg><i class="sw bld"></i><span>buildings_Cleaned</span><svg class="mem" viewBox="0 0 18 16"><rect x=".5" y=".5" width="17" height="15" fill="#f8f8f8" stroke="#ddd"/><path d="M5.500 3v10M8 3v10M10.500 3v10M13 3v10" stroke="#888"/><rect x="3.500" y="5" width="11" height="6" rx="1" fill="#fff" stroke="#777"/></svg><em></em></div>
<div class="lr"><svg class="ck"><use href="#tick"/></svg><i class="sw buf"></i><span>Buffered</span><svg class="mem" viewBox="0 0 18 16"><rect x=".5" y=".5" width="17" height="15" fill="#f8f8f8" stroke="#ddd"/><path d="M5.500 3v10M8 3v10M10.500 3v10M13 3v10" stroke="#888"/><rect x="3.500" y="5" width="11" height="6" rx="1" fill="#fff" stroke="#777"/></svg><em></em></div>
<div class="lr"><svg class="ck"><use href="#tick"/></svg><i class="pt"></i><span>pofw</span><em></em></div>
<div class="lr"><svg class="ck"><use href="#tick"/></svg><i class="sw"></i><span>lagos_admin_boundary</span><em></em></div></div>
</section>
<i class="vgrip"></i>

<section class="mapbox"><svg class="map" viewBox="434 161 559 538">
<g class="geom" transform="translate(430 160) scale(.33333)">
<path fill="none" d="M12 1142L50 1143 90 1145 130 1150 155 1155 180 1159 192 1166 215 1163 245 1158 290 1160 330 1162 352 1155 380 1145 415 1142 430 1147 472 1155 485 1140 520 1130 550 1120 562 1121 575 1125 590 1118 605 1108 625 1080 650 1052 M735 995L733 950 725 915 712 890 710 855 700 830 690 810 685 780 690 765 705 745 750 700 790 670 830 652 868 632"/>
<path class="lu" d="M268 1158L295 1160 300 1165 285 1172 276 1168zM215 1164L228 1162 224 1169zM330 1162L352 1155 380 1145 415 1142 397 1150 390 1162 365 1157 333 1164 331 1172zM478 1148L484 1138 492 1138 490 1144zM560 1130L575 1124 566 1131zM512 1133L522 1130 518 1135z"/>
</g>
<g class="geom" transform="translate(700 190) scale(.33333)">
<path fill="none" d="M360 105L390 118 430 132 475 150 495 163 530 168 565 173 645 172M690 250L725 275 760 300 775 325 783 342M208 88L185 130 165 170 120 235 112 260 102 340 102 395 112 402 108 468 88 490 72 515 50 548 0 573"/>
<path class="lu" d="M622 175L645 172 655 178 668 197 680 225 693 252 682 250 672 245 655 225 640 200 626 188z"/>
<path class="lu" d="M783 342L806 341 840 345 880 355 880 408 858 410 842 417 800 420 785 408 772 402 765 406 757 400 765 380 774 365 788 353 800 358 804 350 786 347zM765 421L778 419 785 425 800 432 825 426 840 430 855 422 880 434 880 555 860 560 850 568 843 565 842 575 828 555 805 525 797 510 798 495 790 480 775 478 765 485 760 470 757 445 762 442 757 435z"/>
<path class="lu" d="M628 650L640 675 658 720 640 725 635 740 640 755 650 757 652 795 635 808 615 822 590 812 560 800 545 785 548 772 558 765 558 740 575 742 590 712 618 702 625 706z"/>
</g>
<g class="geom" transform="translate(640 440) scale(.33333)">
<path class="lu" d="M948 67L975 64 974 77 948 80zM978 72L988 60 1000 68 1020 78 1060 72 1060 203 1022 203 1030 235 1018 238 1010 222 1004 206 992 203 988 190 980 185 980 157 953 155 950 95 975 93z"/>
<path class="lu" d="M125 347L140 352 160 356 178 362 182 378 190 380 205 385 228 402 245 400 258 408 270 398 290 406 292 420 285 440 276 430 270 445 272 515 280 538 262 536 235 533 235 528 210 525 190 530 187 478 140 478 138 510 115 510 103 480 70 408 125 405 122 375 115 372 124 365z"/>
<path class="lu" d="M297 570L330 573 390 567 391 560 400 557 402 572 412 565 418 580 450 585 462 598 480 605 485 625 497 630 498 675 504 682 488 690 478 685 470 670 440 668 432 678 428 664 415 660 410 668 397 672 395 690 375 692 370 698 355 702 345 688 343 665 338 655 325 652 328 638 336 636 330 607 307 600 308 580z"/>
<path class="lu" d="M440 552L470 545 530 538 628 538 645 560 635 568 585 572 578 587 568 585 565 595 550 598 545 590 556 583 550 570 515 565 470 563 468 553z"/>
<path class="lu" d="M322 763L335 768 350 766 360 772 385 766 410 770 428 769 418 776 335 778z"/>
</g>
<g class="geom" transform="translate(430 520) scale(.33333)">
<path class="lu" d="M283 188L330 183 360 184 405 177 440 180 485 182 480 165 482 150 493 141 500 147 494 157 498 168 505 157 510 167 522 155 520 165 538 168 550 182 570 180 583 188 577 200 590 212 602 210 600 225 612 230 605 238 625 237 635 230 670 255 640 270 648 276 635 280 635 298 675 298 707 328 690 342 650 350 625 355 608 332 600 338 583 337 577 322 560 322 540 312 515 312 505 317 492 313 480 320 440 317 385 308 370 310 350 335 335 327 310 312 280 307 250 304 235 296 215 300 178 293 172 286 168 302 158 295 158 282 170 278 182 280 205 280 225 271 245 270 268 245 292 238 300 225 287 225z"/>
</g>
<g class="geom" transform="translate(0 0)">
<path class="lu body" d="M774 204L784 205 794 208 820 225 789 247 788 250 790 252 800 259 809 265 822 265 825 270 828 277 847 289 849 294 848 299 846 302 841 303 842 309 840 311 841 316 838 324 836 331 835 335 841 341 845 345 849 356 856 363 856 372 854 390 855 405 853 413 851 417 852 424 848 430 845 444 845 450 854 451 855 475.500 869.500 475.500 869 456 878 452 885 458 900 463 898 468 893 478 889 481 894 483 895 495 889 497 890 511 893 512 895 507 900 508 898 520 890 522 886 527 880 531 878 534 877 545 872 557 869 562 861 567 840 573 822.500 577.500 822 551 820 539 818 549 815 553 806 557 803 555 798 560 795 559 793 555 788 558 783 559 780 562 773 562 770 570 766 573 757 574 754 570 752 568 751 572 759 580 759 588 753 582 748 583 746 579 741 583 737 588 734 584 728 580 722 574 711 571 707 566 712 561 710 555 706 552 703 548 697 549 692 546 684 544 678 539 677 531 673 528 670 522 664 520 661 524 660 533 657 526 653 528 650 519 648 515 644 517 640 520 637 527 635 527 634 533 633 527 635 522 642 515 650 508 659 506 667 501 673 497 674 492 680 488 680 477 677 466 677 448 670 441 667 425 663 421 664 413 670 412 673 413 676 407 677 410 678 403 681 406 685 408 686 404 688 406 690 398 691 403 698 401 696 387 702 384 719 372 725 362 730 352 737 345 736 315 739 273 747 256 757 244 764 228 770 220 774 210z"/>
</g>
<g class="geom hole" transform="translate(700 190) scale(.33333)">
<path d="M108 468L150 458 195 460 240 453 280 460 310 465 345 468 362 460 382 445 387 425 383 420 388 418 393 425 407 423 405 427 392 430 388 445 372 465 355 478 320 476 300 471 240 463 170 465 140 470 125 475 112 495 100 498 95 505 75 515 88 490z"/>
<path d="M244 455L243 412 237 370 240 350 233 345 232 318 236 300 232 278 240 265 248 262 240 275 239 320 243 355 245 385 252 402 246 412 246 455zM362 328L363 345 372 362 374 380 383 405 384 420 388 415 387 405 380 402 377 380 368 355z"/>
<path d="M147 378L160 375 170 368 185 372 200 388 196 400 207 403 206 415 196 412 183 402 160 395 145 387zM263 352L272 354 277 350 285 353 284 365 275 378 270 366 264 362zM183 430L195 428 198 438 209 440 208 452 192 455 188 450 195 442zM188 122L196 115 198 125 180 152 175 150zM128 218L135 210 136 217 127 232z"/>
<path d="M260 595L287 597 283 610 265 630 235 650 200 655 150 668 90 676 50 683 44 668 40 690 0 712 40 694 100 684 150 672 188 662 220 655 250 636 265 615zM235 648L252 670 213 670 225 658zM272 657L275 668 335 745 340 763 345 738 350 750 346 775 353 790 350 840 343 840 346 800 338 785 335 770 300 715 267 668z"/>
<path d="M770 490L778 479 795 482 797 495 787 505zM535 788L548 785 562 798 605 818 600 823 565 805 555 803z"/>
</g>
<g class="geom hole" transform="translate(640 440) scale(.33333)">
<path d="M445 110L450 125 447 145 456 165 460 185 480 203 500 210 513 204 522 180 534 150 532 120 515 98 520 80 525 60 519 30 518 0 530 0 528 25 536 45 528 80 536 100 536 118 546 130 542 148 532 180 528 215 536 235 530 262 552 272 558 290 545 300 548 330 535 335 530 330 530 305 510 298 512 290 530 290 525 250 505 245 495 222 480 210 465 205 445 193 430 196 450 188 445 150z"/>
<path d="M165 262L175 249 200 252 218 246 237 257 232 270 222 280 242 275 255 290 270 300 262 318 240 305 235 318 205 318 198 308 176 302 175 285zM262 318L300 305 330 294 360 290 380 283 385 320 400 350 398 362 385 358 370 360 350 340 335 336 325 345 302 348 292 352 285 330zM240 262L255 258 285 268 300 280 328 292 290 282 262 270z"/>
<path d="M293 102L270 120 258 138 243 143 232 160 215 180 202 212 190 225 205 233 280 237 284 225 298 193 277 222 240 218 215 226 208 215 218 185 245 150 272 133z"/>
<path d="M695 240L710 225 720 240 712 260 698 250zM728 95L745 88 752 110 732 118zM650 360L662 342 682 350 668 362zM328 40L342 28 352 32 340 42zM332 380L345 370 352 375 340 385zM243 425L290 407 292 422 258 434 250 455z"/>
<path d="M80 430L88 420 98 428 105 438 120 430 125 447 115 475 98 473 92 465 105 455zM190 480L265 475 265 492 245 490 268 505 262 520 240 512 225 520 190 522zM495 548L520 543 516 556 490 560 480 552z"/>
</g>
<g class="geom hole" transform="translate(430 520) scale(.33333)">
<path d="M292 240L300 226 350 208 385 207 415 212 390 222 372 225 380 240 385 252 375 250 368 262 362 243 350 238 335 240 342 262 330 262 325 252 315 236 303 250 295 265 303 275 320 283 350 280 370 268 412 270 385 274 370 280 365 290 355 285 345 298 340 287 328 298 324 286 312 298 308 280 290 275 286 262z"/>
<path d="M415 212L510 213 535 222 550 236 575 237 582 245 573 250 545 240 530 225 510 218 480 222 425 220 423 235 435 248 418 248 418 225z"/>
</g>
<g class="geom lines" transform="translate(430 160) scale(.33333)"><path d="M725 850L760 840 790 825 805 807 830 797 855 785 852 758 860 770 870 770M740 915L742 885 760 865 790 860 800 845 820 825 840 820 842 830 845 815 870 800M740 915L760 920 780 928 785 910 788 930 805 935 830 920 850 912 820 937 807 958 790 948 760 945 757 1000 745 1005 745 1020 757 1025 742 1037 768 1060 790 1062 820 1057 828 1050 835 1030 855 1010 870 985M730 1040L745 1050 775 1075 785 1070M795 1075L805 1062 820 1065 812 1078z"/></g>
<g class="geom lines" transform="translate(700 190) scale(.33333)"><path d="M210 88L235 110 255 125 262 145 270 148 263 155 268 172 255 182 265 180M235 115L242 122 240 130 225 128zM325 475L310 500 280 528 271 592M266 635L265 670M230 523L248 540 222 575 198 553zM390 634L412 632 418 650 416 700 408 712 398 705 388 700zM0 745L15 730 35 728 60 712 100 700 125 690 165 672 215 662M115 698L120 715 130 725M30 725L33 740M420 325L430 320 428 335zM150 785L160 778 170 782 155 792zM165 735L175 733 178 745 170 752 163 745zM0 830L30 822 40 824M830 440L840 438 845 450 835 455zM850 492L880 490M870 480L872 500"/></g>
<g class="geom lines" transform="translate(640 440) scale(.33333)"><path d="M548 300L550 414M558 290L680 182 690 80 695 100 688 152 780 95M680 182L688 152M715 42L780 85M110 60L115 45 140 30 165 22 205 0M98 200L130 225 160 235 180 225M165 232L178 220 190 225 178 238zM138 390L163 390 158 408 138 405zM175 420L190 422 190 438 172 435zM205 435L222 432 220 452 205 450zM225 433L242 433 242 457 225 455zM125 405L110 440 130 455 165 450 200 455M205 385L180 405 170 430 165 450 200 465 235 465M100 450L120 460M188 470L215 468 225 475 265 470 250 485 262 495M195 480L200 525M215 470L212 500 240 498 240 530 225 505 250 520M140 478L130 460M205 412L225 410 220 422 208 425zM445 612L445 665M343 660L375 658M597 368L612 365 620 382 600 378zM620 368L630 378 638 385 610 382M712 275L735 240 735 225M690 190L692 170M545 310L560 308 562 320 548 322zM655 225L665 228 660 234 653 230zM587 112L595 120 588 122z"/></g>
<g class="geom lines" transform="translate(430 520) scale(.33333)"><path d="M540 256L560 250 575 258 590 275 610 280 635 270 645 272M632 258L633 275M420 245L440 250 460 235 475 237 482 244M240 290L250 300 275 285M470 180L530 190M318 320L340 310M262 270L285 262 292 240M546 272L552 275"/></g>
<g class="geom">
<g fill="#b5474b"><path d="M609.500 625L615 626 619 629 622 627 624 630A8 8 0 1 1 609.500 628z"/><path d="M816 478L819 479 820 486 817 488zM977 319L981 323 978 326zM810 440L813 446 811 446zM817 439v4z"/><circle cx="934" cy="329" r="8"/><circle cx="933" cy="535" r="8"/><circle cx="910" cy="597" r="8"/><circle cx="858.500" cy="643" r="8"/><circle cx="992" cy="612" r="8"/><path d="M994 521a8 8 0 0 0-12 8q-1 3 1 7a8 8 0 0 0-3 15q4 1 3 5a8 8 0 0 0 11 11z"/></g>
<path fill="#fff" d="M989 541l5-3v6z"/><path class="lu" d="M994 552l-5 1-1 6 3 5h3z"/>
<g class="lu"><path d="M957 547l4 3-2 4-4-4zM956 588l5-2 1 5-4 2zM932 412l4 2-2 3zM909 352h2v3h-2zM905 368h2v2zM909 391l3 1-2 3 3 3-4 2zM943 549l3-1v4zM951 553l2 1-2 2zM918 466l3 2-3 2z"/></g>
</g>
<g class="geom ye" transform="translate(700 190) scale(.33333)"><path d="M688 508L715 515 735 495 758 500 765 485 790 520 835 575 839 595 830 620 802 652 800 640 806 630 812 600 800 603 790 595 775 606 753 582 775 568 768 535 745 530 738 540 720 540 712 525z"/><path fill="#fff" d="M768 587L772 578 785 580 778 597z"/><path d="M228 85L238 85 244 76 256 85 252 97 240 97 230 90zM258 815L270 808 278 798 285 800 280 812 295 815 280 832 272 838zM635 712L642 707 642 715z"/></g>
<g class="geom ye" transform="translate(640 440) scale(.33333)"><path d="M620 95L638 95 632 118 615 115zM610 130L617 128 615 135zM700 108L716 102 718 112 702 114zM448 600L475 602 473 612 450 608zM438 85L446 84 446 90zM455 50L465 52 463 62 474 66 458 82 446 78z"/></g>
<g class="dots"><path d="M829 267h.01M884 277h.01M896 271h.01M884 300h.01M914 316h.01M909 321h.01M914 323h.01M843 331h.01M882 331h.01M934 345h.01M939 345h.01M924 370h.01M898 411h.01M915 411h.01M969 439h.01M984 440h.01M925 450h.01M954 457h.01M923 467h.01M964 499h.01M968 517h.01M961 526h.01M966 529h.01M932 517h.01M935 513h.01M924 557h.01M925 583h.01M954 577h.01M967 603h.01M984 581h.01M958 620h.01M895 627h.01M933 636h.01M936 634h.01M962 656h.01M868 620h.01M850 596h.01M823 590h.01M554 562h.01M570 563h.01M640 592h.01M665 591h.01M667 597h.01M668 603h.01M665 610h.01M741 605h.01M746 612h.01M747 616h.01M738 613h.01M757 601h.01M757 612h.01M751 617h.01M820 383h.01M613 610h.01M836 490h.01M785 628h.01M790 629h.01M810 632h.01M990 623h.01M992 631h.01"/></g>
</svg></section>
<i class="vgap"></i>

<section class="right">
<div class="ptitle"><span>Processing Toolbox</span><svg><use href="#float"/></svg><svg><use href="#close"/></svg></div>
<div class="ptools"><svg><use href="#gears"/></svg><svg><use href="#py"/></svg><svg><use href="#clock"/></svg><svg><use href="#doc"/></svg><i class="s"></i><svg><use href="#editp"/></svg><i class="s"></i><svg><use href="#wrench"/></svg></div>
<div class="field psearch"><svg class="i13"><use href="#search"/></svg><span>de</span><svg class="clr" viewBox="0 0 13 11"><path d="M4 .5h8.500v10H4L.5 5.500z" fill="#8b8b8b"/><path d="M5 3l5 5M10 3L5 8" stroke="#fff" stroke-width="1.200"/></svg></div>
<div class="box ptree"><div class="rows">
<div class="g hl"><i class="tdn"></i><svg><use href="#clockb"/></svg><span>Recently used</span></div><div class="c"><svg><use href="#gearsym"/></svg><span>Delete duplicate geometries</span></div>
<div class="g"><i class="tdn"></i><svg><use href="#q"/></svg><span>Cartography</span></div><div class="c"><svg><use href="#gearsym"/></svg><span>Create categorized renderer from styles</span></div>
<div class="g"><i class="tdn"></i><svg><use href="#q"/></svg><span>File tools</span></div><div class="c"><svg><use href="#gearsym"/></svg><span>Download file</span></div>
<div class="g"><i class="tdn"></i><svg><use href="#q"/></svg><span>Graphics</span></div><div class="c"><svg><use href="#gearsym"/></svg><span>Mean and standard deviation plot</span></div>
<div class="g"><i class="tdn"></i><svg><use href="#q"/></svg><span>Interpolation</span></div><div class="c"><svg><use href="#heat"/></svg><span>Heatmap (Kernel Density Estimation)</span></div>
<div class="g"><i class="tdn"></i><svg><use href="#q"/></svg><span>Layer tools</span></div><div class="c"><svg><use href="#extent"/></svg><span>Extract layer extent</span></div>
<div class="g"><i class="tdn"></i><svg><use href="#q"/></svg><span>Raster analysis</span></div><div class="c"><svg><use href="#gearsym"/></svg><span>Raster layer zonal statistics</span></div></div>
<div class="sb"><i class="ua"></i><i class="thumb"></i><i class="trk"></i><i class="da"></i></div></div>
<div class="tabs"><span class="t1">Layer Styling</span><span class="t2">Processing Toolbox</span></div>
<div class="split rs"><i></i></div>
<div class="ptitle topo"><span>Topology Checker Panel</span><svg><use href="#float"/></svg><svg><use href="#close"/></svg></div>
<div class="ptools t"><svg><use href="#chk"/></svg><svg><use href="#chks"/></svg><svg><use href="#wrench"/></svg></div>
<div class="box errs"><div class="eh"><span>Error</span><span>Layer</span><span>Feature ID</span></div></div>
<div class="efoot"><i class="cb"></i><span>Show errors</span><span class="ne">No errors were found</span></div>
<div class="wm"><p class="w1">Activate Windows</p><p class="w2">Go to Settings to activate Windows.</p></div>
</section>
</main>

<footer class="status">
<div class="field loc"><svg class="i13"><use href="#search"/></svg><span>Type to locate (Ctrl+K)</span></div>
<span class="lb coord">Coordinate</span><div class="field cf">77252,277672</div>
<svg class="mouse" viewBox="0 0 16 16"><path d="M1 2l7 6M2 6l6 4M14 1l-4 5M1 10l3 1" stroke="#333" stroke-width="1.600"/><path d="M8 5c4-2 7 4 4 8-3 4-8 1-6-3z" fill="#fff" stroke="#222" stroke-width="1.400"/><path d="M9 6l3 5M6 10l6-2" stroke="#222"/></svg>
<span class="lb scale">Scale</span><div class="field sf"><span>1:240689</span><b><i class="dd"></i></b></div>
<svg class="lock" viewBox="0 0 14 16"><path d="M3.500 8V5a3.500 4 0 0 1 7 0v3" fill="none" stroke="#888" stroke-width="1.600"/><rect x="1" y="7" width="12" height="8.500" rx="1.500" fill="#5e5e5e"/><path d="M2 9h10M2 11h10M2 13h10" stroke="#777" stroke-width=".8"/></svg>
<span class="lb magn">Magnifier</span><div class="field mf"><span>100%</span><b class="spin"></b></div>
<span class="lb rot">Rotation</span><div class="field rf"><span>0.0 °</span><b class="spin"></b></div>
<svg class="rck"><use href="#tick"/></svg><span class="lb rend">Render</span>
<svg class="globe" viewBox="0 0 16 16"><ellipse cx="8" cy="7.500" rx="7.500" ry="6" fill="#aaa"/><path d="M3 3.500h10M1 6.500h14M1 9.500h14M4 12h8M8 1v14M5 2q-4 5 0 11M11 2q4 5 0 11" stroke="#666" fill="none" stroke-width=".8"/></svg><span class="lb epsg">EPSG:26391</span>
<svg class="msg" viewBox="0 0 17 16"><path d="M8.500 1C13 1 16.500 3 16.500 7s-3 5-6 5l-3 3.500V12C3 12 .5 10 .5 6.500S4 1 8.500 1z" fill="#5e5e5e"/><path d="M4 6.500h2M7.500 6.500h2M11 6.500h2" stroke="#fff" stroke-width="2"/></svg>
</footer>
<div class="edge"><i></i><i></i><i></i></div>
</div>
</body>
</html>
```
FILE: styles.css
```css
* { box-sizing: border-box; }
body { margin: 0; width: 1365px; height: 729px; overflow: hidden; background: #efefef; color: #000; font: 11.5px/18px "Open Sans", "Noto Sans", sans-serif; }
i, em { font-style: normal; display: block; flex: none; }
svg { flex: none; display: block; }
.defs { position: absolute; }
.app { display: flex; flex-direction: column; height: 729px; }
.titlebar { height: 23px; background: #fff; display: flex; align-items: center; padding-left: 2px; flex: none; }
.i16 { width: 17px; height: 17px; }
.wtitle { margin-left: 4px; font-size: 12px; letter-spacing: -.33px; }
.winbtns { margin-left: auto; display: flex; gap: 34px; padding: 0 18px 3px 0; }
.winbtns svg { width: 12px; height: 12px; }
.menu { height: 20px; flex: none; border-bottom: 1px solid #d0d0d0; padding-left: 10px; display: grid; grid-template-columns: 51px 34px 39px 42px 56px 53px 47px 46px 62px 38px 43px 71px 60px; line-height: 20px; letter-spacing: -.05px; }
.menu u { text-underline-offset: 2px; }
.tb { height: 39px; flex: none; display: flex; align-items: center; background: linear-gradient(#fafafa, #ededed); border-bottom: 1px solid #b5b5b5; }
.tb b { width: 33px; height: 32px; display: flex; align-items: center; justify-content: center; flex: none; position: relative; }
.tb b > svg { width: 24px; height: 24px; }
.tb b.on::before { content: ""; position: absolute; inset: 0 1px; border: 1px solid #a5a5a5; border-radius: 2px; background: #dcdcdc; }
.tb b.on svg { position: relative; }
.off svg { opacity: .4; filter: grayscale(.75); }
.grip { width: 16px; height: 17px; background: radial-gradient(circle, #b8b8b8 34%, transparent 45%) 50% 0 / 4px 3px; background-clip: content-box; padding: 0 6px; }
.grip.first { width: 12px; padding: 0 3px 0 5px; }
.grip.narrow { width: 14px; padding: 0 5px; }
.grip.wide { width: 17px; padding: 0 4px 0 8px; }
.grip.roomy { width: 18px; padding: 0 6px 0 8px; }
.sep { width: 7px; height: 22px; border-left: 1px solid #ccc; margin-left: 2px; margin-right: -2px; }
.dd { width: 12px; height: 5px; background: #555; clip-path: polygon(2px 0, 10px 0, 6px 5px); }
.dd.soft { background: #999; }
.tb .tiny::after { content: ""; position: absolute; right: 2px; bottom: 3px; border: 3px solid transparent; border-top-color: #999; border-bottom: 0; }
.field { background: #fff; border: 1px solid #aaa; border-radius: 3px; height: 22px; display: flex; align-items: center; overflow: hidden; white-space: nowrap; }
.third { height: 38px; }
.tb .geo { margin-left: -1px; }
.combo { width: 81px; height: 22px; margin-left: 2px; border: 1px solid #aaa; border-radius: 2px; background: linear-gradient(#fff, #f0f0f0); display: flex; align-items: center; justify-content: space-between; padding: 2px 3px 0; letter-spacing: -.2px; }
.geofield { width: 769px; margin-left: 1px; padding: 1px 0 0 2px; color: #6e6e6e; letter-spacing: -.1px; }
.work { height: 541px; flex: none; display: flex; }
.dock { width: 52px; background: linear-gradient(90deg, #fafafa, #ececec); border-right: 1px solid #b9b9b9; padding-top: 5px; flex: none; }
.hgrip { width: 16px; height: 5px; margin: 0 0 3px 19px; background: radial-gradient(circle, #b8b8b8 34%, transparent 45%) 0 0 / 3px 3px; }
.dock > div { height: 32.050px; display: flex; align-items: center; padding-left: 8px; gap: 4px; }
.dock svg { width: 24px; height: 24px; }
.left { width: 375px; flex: none; display: flex; flex-direction: column; }
.ptitle { height: 21px; display: flex; align-items: center; padding: 1px 2px 0 4px; flex: none; gap: 3px; }
.ptitle span { flex: 1; letter-spacing: -.12px; }
.ptitle svg { width: 11px; height: 11px; }
.ptools { height: 30px; display: flex; align-items: center; gap: 9px; padding: 0 0 3px 8px; flex: none; }
.ptools svg { width: 16px; height: 16px; }
.box { background: #fff; border: 1px solid #b5b5b5; flex: none; overflow: hidden; display: flex; }
.browser { height: 102px; }
.rows { flex: 1; overflow: hidden; }
.br { height: 18px; display: flex; align-items: center; }
.br i { width: 23px; height: 8px; }
.br .tri { clip-path: polygon(8px 0, 12px 4px, 8px 8px); background: #555; }
.br svg { width: 16px; height: 16px; margin-right: 6px; }
.br span, .g span, .c span { white-space: nowrap; padding-top: 2px; }
.br span { letter-spacing: -.1px; }
.sb { width: 14px; border-left: 1px solid #b5b5b5; background: #e6e6e6; display: flex; flex-direction: column; }
.ua, .da { height: 14px; background: #fafafa; display: grid; place-items: center; }
.ua { border-bottom: 1px solid #b5b5b5; }
.da { border-top: 1px solid #b5b5b5; }
.ua::after, .da::after { content: ""; border: 4px solid transparent; }
.ua::after { border-bottom-color: #555; border-top: 0; }
.da::after { border-top-color: #555; border-bottom: 0; }
.thumb { height: 27px; background: linear-gradient(90deg,#fff,#eee); border-bottom: 1px solid #b5b5b5; }
.trk { flex: 1; }
.split { height: 5px; display: flex; justify-content: center; align-items: center; }
.split i { width: 17px; height: 1px; background: repeating-linear-gradient(90deg,#aaa 0 1px,transparent 1px 3px); }
.ptools .dd { margin-left: -6px; margin-right: -3px; }
.ptools.lay { padding-bottom: 2px; }
.layers { height: 332px; flex-direction: column; }
.lr { height: 18px; display: flex; align-items: center; padding-left: 23px; font-weight: bold; font-size: 11px; }
.lr.sel { background: linear-gradient(#1b86df, #0a7adb); color: #fff; text-decoration: underline; }
.ck { width: 14px; height: 14px; margin-right: 6px; }
.sw { width: 16px; height: 16px; border: 1px solid #777; margin-right: 6px; }
.landuse { background: #6463ab; border-color: #45447a; }
.bld { background: #e77390; border-color: #a8506a; }
.buf { background: #b5474b; border-color: #7b2c30; }
.pt { width: 8px; height: 8px; border-radius: 50%; background: #9a76b4; border: 1px solid #555; margin: 0 10px 0 4px; }
.lr span { flex: 1; padding-top: 2px; letter-spacing: -.05px; }
.mem { width: 17px; height: 16px; }
.lr em { width: 3px; height: 16px; background: #e0e0e0; margin-right: 1px; }
.vgrip, .vgap { width: 6px; background: repeating-linear-gradient(#aaa 0 1px,transparent 1px 3px) 3px 262px / 1px 17px no-repeat; }
.mapbox { width: 561px; height: 540px; margin-top: 1px; flex: none; border: 1px solid #b5b5b5; background: #fff; }
.map { width: 559px; height: 538px; }
.geom path, .geom circle { stroke: #262326; stroke-width: .9px; vector-effect: non-scaling-stroke; stroke-linejoin: round; }
.lu { fill: #8b5a98; }
.hole path { fill: #fff; }
.lines path { fill: none; }
.ye { fill: #ff0; }
.dots path { fill: none; stroke: #333; stroke-width: 1.8px; stroke-linecap: round; }
.right { width: 365px; flex: none; display: flex; flex-direction: column; position: relative; }
.right .ptitle { padding-right: 1px; }
.psearch { height: 21px; border-right: 0; border-radius: 3px 0 0 3px; padding-left: 7px; flex: none; }
.i13 { width: 13px; height: 13px; margin-right: 7px; }
.psearch span { flex: 1; padding-top: 1px; }
.clr { width: 13px; height: 11px; margin-right: 8px; }
.ptree { height: 250px; border-right: 0; margin-top: 1px; }
.g, .c { height: 18px; display: flex; align-items: center; letter-spacing: -.14px; }
.hl { background: #f0f0f0; }
.c svg { width: 15px; height: 15px; margin-right: 6px; }
.g svg { width: 16px; height: 16px; margin-right: 6px; }
.c { padding-left: 44px; }
.tdn { width: 23px; height: 5px; background: #555; clip-path: polygon(5px 0, 14px 0, 9.5px 5px); }
.tabs { height: 25px; display: flex; align-items: flex-start; line-height: 21px; border-top: 1px solid #c5c5c5; margin-top: 1px; flex: none; text-align: center; white-space: nowrap; font-size: 11px; letter-spacing: -.1px; }
.t1 { width: 86px; height: 21px; background: #dcdcdc; border: 1px solid #b5b5b5; border-top: 0; }
.t2 { width: 116px; height: 23px; line-height: 23px; background: #f8f8f8; border: 1px solid #b5b5b5; border-top: 0; border-radius: 0 0 2px 2px; }
.rs { height: 4px; }
.ptools.t { height: 36px; padding-bottom: 9px; }
.errs { height: 106px; border-right: 0; }
.eh { height: 19px; width: 100%; display: grid; grid-template-columns: 109px 56px 1fr; text-align: center; background: linear-gradient(#fff,#ececec); border-bottom: 1px solid #b5b5b5; line-height: 20px; letter-spacing: -.1px; }
.eh span + span { border-left: 1px solid #c5c5c5; }
.efoot { height: 25px; display: flex; align-items: center; padding-top: 7px; }
.cb { width: 14px; height: 14px; background: #fff; border: 1px solid #b4b4b4; margin-right: 4px; }
.efoot span { font-size: 11px; width: 60px; letter-spacing: -.2px; white-space: nowrap; }
.efoot .ne { margin-left: 107px; width: 110px; letter-spacing: -.3px; }
.wm { position: absolute; left: 73px; top: 491px; color: rgba(120,120,120,.5); white-space: nowrap; }
.wm p { margin: 0; }
.w1 { font-size: 19.2px; line-height: 24px; }
.w2 { font-size: 14.7px; line-height: 21px; letter-spacing: -.02px; }
.ptools .s { width: 1px; height: 12px; background: #ccc; margin: 0 -1.5px; }
.status { height: 28px; flex: none; display: flex; align-items: center; padding-left: 4px; white-space: nowrap; font-size: 11px; letter-spacing: -.15px; }
.loc { width: 200px; color: #777; padding-left: 8px; letter-spacing: 0; }
.lb { margin-right: 4px; }
.coord { margin-left: 362px; width: 53px; letter-spacing: -.3px; }
.scale { width: 26px; }
.magn { width: 44px; letter-spacing: -.6px; }
.rend { width: 37px; letter-spacing: -.3px; }
.epsg { width: 60px; letter-spacing: -.2px; }
.cf { width: 92px; justify-content: center; }
.mouse { width: 16px; height: 16px; margin: 0 12px 0 4px; }
.sf { width: 80px; padding-left: 3px; justify-content: space-between; }
.sf b { width: 18px; height: 22px; border-left: 1px solid #b5b5b5; display: grid; place-items: center; background: #f7f7f7; }
.lock { width: 14px; height: 16px; margin: 0 7px 0 11px; }
.mf { width: 88px; justify-content: space-between; padding-left: 4px; }
.rf { width: 84px; justify-content: space-between; padding-left: 4px; }
.spin { width: 15px; height: 22px; border-left: 1px solid #b5b5b5; background: #f7f7f7; display: flex; flex-direction: column; align-items: center; justify-content: center; gap: 3px; }
.spin::before, .spin::after { content: ""; border: 4px solid transparent; }
.spin::before { border-bottom-color: #555; border-top: 0; }
.spin::after { border-top-color: #555; border-bottom: 0; }
.rot { margin-left: 8px; width: 47px; }
.rck { width: 14px; height: 14px; margin: 0 4px 0 7px; }
.globe { width: 16px; height: 16px; margin: 0 3px 0 12px; }
.msg { width: 17px; height: 16px; margin-left: auto; margin-right: 6px; }
.edge { height: 1px; display: flex; flex: none; }
.edge i { background: #48383f; width: 48px; }
.edge i:nth-child(2) { background: #aaa2a5; width: 344px; }
.edge i:nth-child(3) { flex: 1; }
```
